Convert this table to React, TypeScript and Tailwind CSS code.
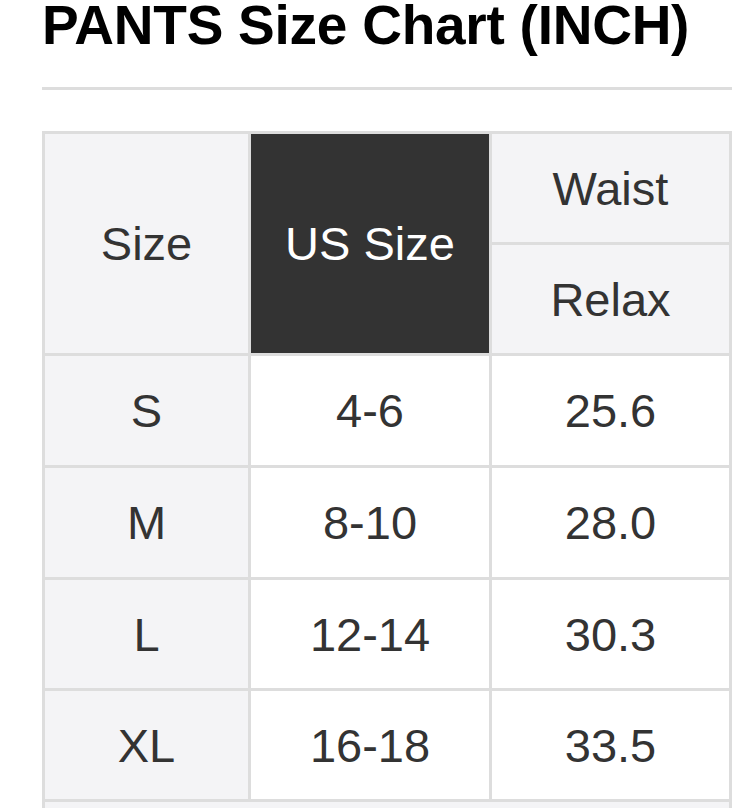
const rows = [
  { size: "S", us: "4-6", waist: "25.6" },
  { size: "M", us: "8-10", waist: "28.0" },
  { size: "L", us: "12-14", waist: "30.3" },
  { size: "XL", us: "16-18", waist: "33.5" },
];

const cell = "flex items-center justify-center text-[47px] leading-none text-[#333]";

export default function App() {
  return (
    <div
      className="min-h-screen bg-white pl-[42px] pb-10"
      style={{ fontFamily: '"Liberation Sans", Arial, sans-serif' }}
    >
      <h1 className="text-[55px] font-bold leading-[50px] text-black tracking-[-0.25px] whitespace-nowrap">
        PANTS Size Chart (INCH)
      </h1>

      <div className="mt-[37px] h-[3px] bg-[#dddddd]" />

      <div className="mt-[41px] grid w-[690px] grid-cols-[203px_238px_237px] grid-rows-[108px_108px_109px_109px_108px_108px_108px] gap-[3px] bg-[#dddddd] p-[3px]">
        <div className={`${cell} row-span-2 bg-[#f4f4f6]`}>Size</div>
        <div className={`${cell} row-span-2 bg-[#333333] text-white`}>US Size</div>
        <div className={`${cell} bg-[#f4f4f6]`}>Waist</div>
        <div className={`${cell} bg-[#f4f4f6]`}>Relax</div>

        {rows.map((r) => (
          <>
            <div key={r.size + "a"} className={`${cell} bg-[#f4f4f6]`}>
              {r.size}
            </div>
            <div key={r.size + "b"} className={`${cell} bg-white`}>
              {r.us}
            </div>
            <div key={r.size + "c"} className={`${cell} bg-white`}>
              {r.waist}
            </div>
          </>
        ))}

        <div className="col-span-3 bg-[#f4f4f6]" />
      </div>
    </div>
  );
}
